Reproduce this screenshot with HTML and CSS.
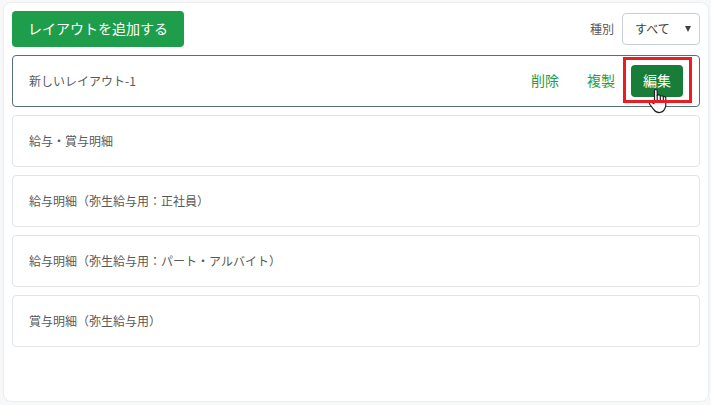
FILE: index.html
```html
<!DOCTYPE html>
<html lang="ja">
<head>
    <meta charset="UTF-8">
    <meta name="viewport" content="width=device-width, initial-scale=1.0">
    <title>レイアウト</title>
    <link rel="stylesheet" href="styles.css">
</head>
<body>
    <main class="panel">
        <header class="toolbar">
            <button class="add">レイアウトを追加する</button>
            <div class="filter">
                <span class="filter-label">種別</span>
                <div class="select">
                    <span class="value">すべて</span>
                    <span class="arrow"></span>
                </div>
            </div>
        </header>

        <div class="list">
            <div class="layout active">
                <div class="title">新しいレイアウト-1</div>
                <div class="actions">
                    <button class="link">削除</button>
                    <button class="link">複製</button>
                    <div class="edit-wrap">
                        <button class="edit">編集</button>
                        <svg class="cursor" width="20" height="28" viewBox="0 0 20 28">
                            <path d="M7.500 15V3q0-1.500 1.300-1.500T10.200 3v4.300q2.800-1 3.100.7 2.700-.6 3 .6 2.500-.3 2.500 1.500v7c0 2-.8 3-1.500 4.500-1 2-2.500 3-5 3s-4-1-5.500-3L2.500 16c-.6-1.500.8-2.300 2-1.700L7.500 16" />
                            <path d="M10.200 7v7M13.300 8v6M16.300 9v5" />
                        </svg>
                        <div class="highlight"></div>
                    </div>
                </div>
            </div>
            <div class="layout">
                <div class="title">給与・賞与明細</div>
            </div>
            <div class="layout">
                <div class="title">給与明細（弥生給与用：正社員）</div>
            </div>
            <div class="layout">
                <div class="title">給与明細（弥生給与用：パート・アルバイト）</div>
            </div>
            <div class="layout">
                <div class="title">賞与明細（弥生給与用）</div>
            </div>
        </div>
    </main>
</body>
</html>
```
FILE: styles.css
```css
* {
    box-sizing: border-box;
}

body {
    font-family: "Noto Sans CJK JP", sans-serif;
    font-size: 12px;
    margin: 0;
    padding: 2px 2px 3px 3px;
    height: 405px;
    background-color: #F7F8F9;
    color: #595959;
    overflow: hidden;
}

.panel {
    height: 400px;
    padding: 8px;
    background-color: #FFFFFF;
    border: 1px solid #EBEDEF;
    border-radius: 8px;
}

.toolbar {
    display: flex;
    justify-content: space-between;
    align-items: center;
    height: 36px;
    margin-bottom: 8px;
}

button {
    padding: 0 0 2px;
    border: none;
    border-radius: 4px;
    font-family: inherit;
    font-size: 14px;
    cursor: pointer;
}

.add {
    width: 172px;
    height: 36px;
    background-color: #1E9E4A; /* Brand green */
    color: #FFFFFF;
}

.filter {
    display: flex;
    align-items: center;
    gap: 8px;
}

.filter-label {
    padding-bottom: 2px;
}

.select {
    display: flex;
    justify-content: space-between;
    align-items: center;
    width: 78px;
    height: 32px;
    padding: 0 8.5px 0 12px;
    border: 1px solid #C8CFD5;
    border-radius: 4px;
    color: #404040;
}

/* Dropdown triangle */
.arrow {
    border-left: 3.5px solid transparent;
    border-right: 3.5px solid transparent;
    border-top: 6px solid #404040;
}

.list {
    display: flex;
    flex-direction: column;
    gap: 8px;
}

.layout {
    display: flex;
    justify-content: space-between;
    align-items: center;
    height: 52px;
    padding: 0 16px;
    border: 1px solid #E1E5E9;
    border-radius: 4px;
}

.layout.active {
    border-color: #546E7A;
}

.title,
.value {
    padding-bottom: 2px;
}

.actions {
    display: flex;
    gap: 4px;
}

.link,
.edit {
    width: 52px;
    height: 32px;
}

.link {
    background: none;
    color: #1E9E4A;
}

.edit {
    display: block;
    background-color: #177D38;
    color: #FFFFFF;
}

.edit-wrap {
    position: relative;
}

.cursor {
    position: absolute;
    top: 23px;
    left: 16px;
    fill: #FFFFFF;
    stroke: #1F1F2B;
    stroke-width: 1.2;
    stroke-linejoin: round;
}

/* Red frame around the edit button */
.highlight {
    position: absolute;
    top: -8px;
    left: -8px;
    width: 69px;
    height: 46px;
    border: 3px solid #ED1C24;
}
```
